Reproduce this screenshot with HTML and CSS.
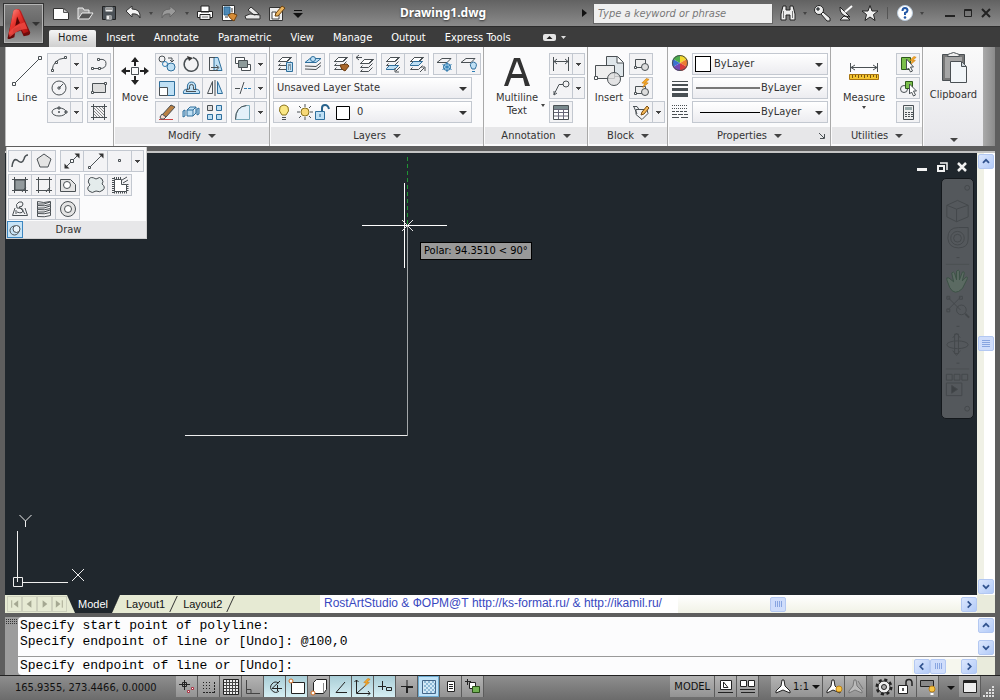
FILE: index.html
```html
<!DOCTYPE html>
<html lang="en">
<head>
<meta charset="utf-8">
<title>Drawing1.dwg</title>
<link rel="stylesheet" href="styles.css">
</head>
<body>
<svg class="defs" aria-hidden="true">
  <defs>
    <symbol id="layers" viewBox="0 0 20 20">
      <path d="M3.500 7.500l4-4h9l-4 4z" fill="#fff"/><path d="M7.500 3.500h9M3.500 7.500l4-4M3.500 7.500h8l4-4M5.500 9.500l-2 2h8l4-4M5.500 13.500l-2 2h8l4-4"/>
    </symbol>
    <symbol id="spark" viewBox="0 0 10 10"><path d="M6 0L1 5l3 .5L2 10l6-5-3-.5L9 1z" fill="#f4a728" stroke="#c97a10" stroke-width=".7"/></symbol>
    <symbol id="up" viewBox="0 0 15 15"><path d="M4 9l3.500-3.500L11 9" fill="none" stroke="#31538f" stroke-width="2"/></symbol>
    <symbol id="down" viewBox="0 0 15 15"><path d="M4 6l3.500 3.500L11 6" fill="none" stroke="#31538f" stroke-width="2"/></symbol>
    <symbol id="left" viewBox="0 0 15 15"><path d="M9 4L5.500 7.500 9 11" fill="none" stroke="#31538f" stroke-width="2"/></symbol>
    <symbol id="right" viewBox="0 0 15 15"><path d="M6 4l3.500 3.500L6 11" fill="none" stroke="#31538f" stroke-width="2"/></symbol>
  </defs>
</svg>

<header class="top">
  <button class="app" aria-label="Application menu">
    <svg viewBox="0 0 32 36">
      <defs>
        <linearGradient id="red" x1="0" y1="0" x2="1" y2="1"><stop offset="0" stop-color="#ff9c94"/><stop offset=".4" stop-color="#e8362f"/><stop offset="1" stop-color="#a80d0d"/></linearGradient>
        <linearGradient id="dark" x1="0" y1="0" x2="0" y2="1"><stop offset="0" stop-color="#c22"/><stop offset="1" stop-color="#5c0606"/></linearGradient>
      </defs>
      <g stroke="none">
        <path d="M4 32L10 4q1-2 4-2 3 0 4 2l10 23q0 2-2 3l-5 1-3-6-6 2-1 5-5 2q-3 0-2-2z" fill="url(#dark)"/>
        <path d="M5 29L10 4q2-3 6-1l10 23-5 2-4-8-7 3-1 6z" fill="url(#red)"/>
        <path d="M14 10l3 7-5 3z" fill="#5a0606"/>
        <path d="M5 27q6-8 17-11l3 7q-9 0-19 9z" fill="#ef4a42" fill-opacity=".8"/>
      </g>
    </svg>
    <i class="tri light"></i>
  </button>
  <div class="top-rows">
    <div class="titlebar">
      <div class="quick">
        <button class="tool" aria-label="New"><svg viewBox="0 0 18 18"><path d="M1.500 4.500h10l5 4v7h-15z" fill="#fff" stroke="#333"/><path d="M11.500 4.500v4h5z" fill="#ccc" stroke="#555"/></svg></button>
        <button class="tool" aria-label="Open"><svg viewBox="0 0 18 18"><path d="M2 15V4h5l1 2h5v3" fill="#999" stroke="#eee"/><path d="M2 15l4-6h11l-4 6z" fill="#555" stroke="#eee"/></svg></button>
        <button class="tool" aria-label="Save"><svg viewBox="0 0 18 18"><path d="M2.500 2.500h13v13h-13z" fill="#4c5258" stroke="#222"/><path d="M5 3h8v5H5zM6 11h6v5H6z" fill="#eee"/><path d="M6 5h6M10 12v3" stroke="#444"/></svg></button>
        <button class="tool" aria-label="Undo"><svg viewBox="0 0 18 18"><path d="M2 7l6-5v3q9 0 8 9-2-5-8-4v3z" fill="#f4f4f4" stroke="#333"/></svg></button><i class="tri tiny"></i>
        <button class="tool" aria-label="Redo"><svg viewBox="0 0 18 18"><path d="M16 7l-6-5v3Q1 5 2 14q2-5 8-4v3z" fill="#999" stroke="#666"/></svg></button><i class="tri tiny"></i>
        <button class="tool" aria-label="Plot"><svg viewBox="0 0 18 18"><path d="M5 2h8v6H5zM1.500 7.500h15v6h-15z" fill="#fff" stroke="#222"/><path d="M4 10.500h10v5H4z" fill="#eee" stroke="#222"/><path d="M6 13h6" stroke="#777"/></svg></button>
        <button class="tool" aria-label="Sheet set"><svg viewBox="0 0 18 18"><path d="M2.500 1.500h12v15h-12z" fill="#fff" stroke="#333"/><path d="M4 3h6v8H4z" fill="#4c8ab9" stroke="#27628c"/><path d="M11 5h2M11 7h2M5 13h3" stroke="#333"/><path d="M8 11l4-2 5 2-3 6q-4-2-6-6z" fill="#d78c35" stroke="#754510"/></svg></button>
        <button class="tool" aria-label="Publish"><svg viewBox="0 0 18 18"><path d="M1 12l5-2 10 1v4H2zM7 3l8 7-5 1-6-5z" fill="#e8e8e8" stroke="#333"/></svg></button>
        <button class="tool" aria-label="Edit sheet"><svg viewBox="0 0 18 18"><path d="M1.500 3.500h13v13h-13z" fill="#eee" stroke="#333"/><path d="M4 8h4v3h3v4H4z" fill="#fff" stroke="#444"/><path d="M7 12l1-3 6-7 3 2-7 8z" fill="#ebb45e" stroke="#68400d"/></svg></button>
        <button class="tool narrow" aria-label="Customize"><svg viewBox="0 0 12 18"><path d="M2 6.500h8" stroke="#111"/><path d="M1 9h10l-5 5z" fill="#111" stroke="none"/></svg></button>
      </div>
      <h1>Drawing1.dwg</h1>
      <div class="info">
        <i class="side"></i>
        <input class="search" type="text" aria-label="Search" placeholder="Type a keyword or phrase">
        <button class="tool" aria-label="Find"><svg viewBox="0 0 18 18"><path d="M4 2h3v4h4V2h3l2 8v6h-5v-5H7v5H2v-6z" fill="#eee" stroke="#222"/><path d="M4.500 7v7M13.500 7v7" stroke="#777"/></svg></button><i class="tri tiny"></i>
        <button class="tool" aria-label="Subscription"><svg viewBox="0 0 18 18"><circle cx="6" cy="6" r="4.500" fill="#eee" stroke="#222"/><circle cx="5" cy="5" r="1.300" fill="#333"/><path d="M8 10l2-2 7 6v3h-3z" fill="#eee" stroke="#222"/></svg></button>
        <button class="tool" aria-label="Communication"><svg viewBox="0 0 18 18"><path d="M3 3q-1 9 10 10zM7 12l-4 4h10l-3-3z" fill="#eee" stroke="#222"/><path d="M8 8l7-6" stroke="#fff" stroke-width="2"/></svg></button>
        <button class="tool" aria-label="Favorites"><svg viewBox="0 0 18 18"><path d="M9 1.500l2 5.500h6l-4.500 3.500 1.500 6-5-3.500-5 3.500 1.500-6L1 7h6z" fill="#eee" stroke="#222"/></svg></button>
        <i class="sep"></i>
        <button class="tool" aria-label="Help"><svg viewBox="0 0 18 18"><circle cx="9" cy="9" r="7.500" fill="#fff" stroke="#bcd"/><path d="M6.500 7q0-3 2.500-3t2.500 2.500Q11.500 8 9 9v2" fill="none" stroke="#2257a5" stroke-width="2"/><circle cx="9" cy="13.500" r="1.300" fill="#2257a5" stroke="none"/></svg></button><i class="tri tiny"></i>
        <div class="win">
          <button aria-label="Minimize"><svg viewBox="0 0 12 12"><path d="M1 9h10" stroke-width="2"/></svg></button>
          <button aria-label="Maximize"><svg viewBox="0 0 12 12"><path d="M2.500 2.500h7v7h-7zM2 3.500h8"/></svg></button>
          <button aria-label="Close"><svg viewBox="0 0 12 12"><path d="M2 2l8 8M10 2l-8 8" stroke-width="2"/></svg></button>
        </div>
      </div>
    </div>
    <nav class="tabs">
      <button class="on">Home</button><button>Insert</button><button>Annotate</button><button>Parametric</button><button>View</button><button>Manage</button><button>Output</button><button>Express Tools</button>
      <button class="min" aria-label="Minimize ribbon"><svg width="26" height="9" viewBox="0 0 26 9"><g stroke="none"><rect width="13" height="7" y="1" rx="2" fill="#e4e4e4"/><path d="M3.500 6h6l-3-3z" fill="#222"/><path d="M18 3h5l-2.500 3z" fill="#ddd"/></g></svg></button>
    </nav>
  </div>
</header>

<section class="ribbon">
  <div class="panel draw">
    <div class="body">
      <button class="big"><svg viewBox="0 0 36 36"><path d="M5 31L31 5"/><path d="M3.500 29.500h3v3h-3zM29.500 3.500h3v3h-3z" fill="#fff"/></svg>Line</button>
      <div class="rows">
        <div class="set"><button aria-label="Polyline arc"><svg viewBox="0 0 20 20"><path d="M3 17Q4 5 16 4"/><path d="M2.500 15.500h2v2h-2zM6.500 7.500h2v2h-2zM15.500 2.500h2v2h-2z" fill="#fff"/></svg></button><button class="arr" aria-label="More arcs"></button></div>
        <div class="set"><button aria-label="Circle"><svg viewBox="0 0 20 20"><circle cx="10" cy="10" r="7"/><path d="M10 10l4-4M9 9h2v2H9z"/></svg></button><button class="arr" aria-label="More circles"></button></div>
        <div class="set"><button aria-label="Ellipse"><svg viewBox="0 0 20 20"><ellipse cx="10" cy="10" rx="7" ry="4"/><path d="M9 10h2M10 9v2"/><path d="M9 5h2v2H9zM16 9h2v2h-2z"/></svg></button><button class="arr" aria-label="More ellipses"></button></div>
      </div>
      <div class="rows">
        <div class="set"><button aria-label="Polyline"><svg viewBox="0 0 20 20"><path d="M2 14.500h9q6 0 6-5t-7-4"/><path d="M2.500 13.500h2v2h-2zM9.500 13.500h2v2h-2zM8.500 4.500h2v2h-2z" fill="#fff"/></svg></button></div>
        <div class="set"><button aria-label="Rectangle"><svg viewBox="0 0 20 20"><path d="M3.500 5.500h13v9h-13z" fill="#ddd"/><path d="M2.500 13.500h2v2h-2zM15.500 4.500h2v2h-2z" fill="#fff"/></svg></button></div>
        <div class="set"><button aria-label="Hatch"><svg viewBox="0 0 20 20"><path d="M2 4.500h16M2 15.500h16M4.500 2v16M15.500 2v16"/><path d="M5 12l3 3M5 9l6 6M5 6l9 9M7 5l8 8M10 5l5 5M13 5l2 2" stroke="#888"/></svg></button></div>
      </div>
    </div>
  </div>

  <div class="panel">
    <div class="body">
      <button class="big"><svg viewBox="0 0 36 36"><path d="M14.500 14.500h7v7h-7z"/><path d="M18 4l4 5h-3v4h-2V9h-3zM18 32l4-5h-3v-4h-2v4h-3zM4 18l5-4v3h4v2H9v3zM32 18l-5-4v3h-4v2h4v3z" fill="#222" stroke="none"/></svg>Move</button>
      <div class="rows">
        <div class="set">
          <button aria-label="Copy"><svg viewBox="0 0 20 20"><circle cx="5" cy="5" r="3"/><path d="M11 4h4v4M13 6l2 2 2-2"/><circle cx="8" cy="10" r="2.500" class="b"/><circle cx="14" cy="13" r="4" class="bf"/></svg></button>
          <button aria-label="Rotate"><svg viewBox="0 0 20 20"><path d="M7 4a7 7 0 1 0 5-.5" stroke-width="1.500"/><path d="M6 2l6 2-4 3z" fill="#333" stroke="none"/></svg></button>
          <button aria-label="Stretch"><svg viewBox="0 0 20 20"><path d="M9 3.500h4l4 13H9z" class="bf"/><path d="M4.500 3v13.500H13M4 3.500h6M6 13.500h7M11 11l3 2.500-3 3"/></svg></button>
        </div>
        <div class="set">
          <button aria-label="Scale"><svg viewBox="0 0 20 20"><path d="M2.500 3.500h15v14h-15z" class="bf"/><path d="M2.500 9.500h8v8h-8z" fill="#fff"/></svg></button>
          <button aria-label="Offset"><svg viewBox="0 0 20 20"><path d="M2.500 15.500q-1-4 4-4.500-1-7 4-7t4 7q5 .5 4 4.500z" class="bf"/><path d="M5 13.500h10M8.500 11V8.500q0-2 2-2t2 2v3h3M5 13q0-2 3.500-2"/></svg></button>
          <button aria-label="Mirror"><svg viewBox="0 0 20 20"><path d="M12.500 3.500l5 12h-5z" class="bf"/><path d="M7.500 3.500l-5 12h5zM10 2v16"/></svg></button>
        </div>
        <div class="set">
          <button aria-label="Erase"><svg viewBox="0 0 20 20"><path d="M2 17.500h14" stroke="#c44"/><path d="M5 13l9-10 4 2-9 10z" fill="#b98043"/><path d="M3 15l2-3 4 3-2 2H4z" fill="#f5d9cc"/></svg></button>
          <button aria-label="Explode"><svg viewBox="0 0 20 20"><path d="M6 8l3-3h6l-3 3v6H6zM6 8h6M12 14l3-3V5M2 9l2-1v6l-2 1zM16 7l2-1v6l-2 1z" class="bf"/></svg></button>
          <button aria-label="Array"><svg viewBox="0 0 20 20"><path d="M2.500 3.500h5v5h-5z" fill="#ddd"/><path d="M11.500 3.500h5v5h-5zM2.500 12.500h5v5h-5zM11.500 12.500h5v5h-5z" class="bf"/></svg></button>
        </div>
      </div>
      <div class="rows second">
        <div class="set"><button aria-label="Draw order"><svg viewBox="0 0 20 20"><path d="M2.500 3.500h9v6h-9zM8.500 10.500h9v6h-9z" fill="#fff"/><path d="M5.500 6.500h9v7h-9z" fill="#8d9a9a"/></svg></button><button class="arr" aria-label="More draw order"></button></div>
        <div class="set"><button aria-label="Trim"><svg viewBox="0 0 20 20"><path d="M2 10.500h5M11 4L7 16"/><path d="M11 10.500h3M15 10.500h3" class="b"/></svg></button><button class="arr" aria-label="More trim"></button></div>
        <div class="set"><button aria-label="Fillet"><svg viewBox="0 0 20 20"><path d="M2.500 17.500q0-13 11-14h3v14z" fill="#e3f1fa" stroke="#7ab"/><path d="M2.500 17.500q0-13 11-14"/></svg></button><button class="arr" aria-label="More fillet"></button></div>
      </div>
    </div>
    <button class="ptitle">Modify<i class="tri"></i></button>
  </div>

  <div class="panel">
    <div class="body">
      <div class="rows">
        <div class="line">
          <div class="set"><button aria-label="Layer properties"><svg viewBox="0 0 20 20"><use href="#layers"/><path d="M11.500 8.500h6v9h-6z" class="bf"/><path d="M13 11h3M13 13h1M15 13h1M13 15h1M15 15h1"/></svg></button></div>
          <div class="set"><button aria-label="Make current"><svg viewBox="0 0 20 20"><path d="M2 8.500l5-4h11l-5 4z" class="bf"/><path d="M2 12l11 .5 5-4M2 15l11 .5 5-4" /><circle cx="10" cy="5" r="2.500" class="bf"/></svg></button></div>
          <div class="set"><button aria-label="Match layer"><svg viewBox="0 0 20 20"><use href="#layers"/><path d="M9 11l7-1 2 2-4 5q-4-1-5-6z" fill="#a8672b" stroke="#6b3c10"/></svg></button><button aria-label="Previous layer"><svg viewBox="0 0 20 20"><use href="#layers" x="2" y="2"/><path d="M1 3.500h6M4 1L1 3.500 4 6"/></svg></button></div>
          <div class="set"><button aria-label="Isolate"><svg viewBox="0 0 20 20"><use href="#layers"/><path d="M3.500 14.500l3-3h9l-4 4h-8z" class="bf"/><path d="M17 13l-4 4M12 14v4h4"/></svg></button><button aria-label="Unisolate"><svg viewBox="0 0 20 20"><use href="#layers"/><path d="M3.500 10.500l3-3h9l-4 4h-8z" class="bf"/><path d="M13 18l4-4M14 13h4v4"/></svg></button></div>
          <div class="set"><button aria-label="Freeze"><svg viewBox="0 0 20 20"><path d="M2 8.500l5-4h9l-4 4z"/><circle cx="12" cy="13" r="3.500" class="bf"/><path d="M12 8v10M7.500 10.500l9 5M7.500 15.500l9-5" class="b"/></svg></button><button aria-label="Layer off"><svg viewBox="0 0 20 20"><path d="M2 8.500l5-4h9l-4 4z"/><path d="M13 15q-4-6 1.500-7 5 1 1.500 7z" class="bf"/><path d="M13 17.500h3" class="b"/></svg></button></div>
        </div>
        <label class="combo"><select aria-label="Layer state"><option>Unsaved Layer State</option></select></label>
        <label class="combo">
          <svg class="wide" viewBox="0 0 80 20"><path d="M8 13q-4-4-2-8 4-4 8 0 2 4-2 8z" fill="#fae784" stroke="#8a7420"/><path d="M8 15.500h4M8 17.500h4"/><circle cx="31" cy="10" r="4" fill="#f7d978" stroke="#8a7420"/><path d="M31 2v3M31 15v3M23 10h3M36 10h3M25 4l2 2M37 4l-2 2M25 16l2-2M37 16l-2-2"/><path d="M41.500 9.500h9v8h-9z" class="bf"/><path d="M48 9V6q0-3 3-3t4 4" fill="none" stroke="#27628c" stroke-width="2"/><path d="M46 12v3" stroke="#27628c"/><path d="M62.500 4.500h13v13h-13z" fill="#fff" stroke="#000"/></svg>
          <select aria-label="Layer"><option>0</option></select></label>
      </div>
    </div>
    <button class="ptitle">Layers<i class="tri"></i></button>
  </div>

  <div class="panel">
    <div class="body">
      <button class="big text"><svg viewBox="0 0 36 36"><path d="M5 33L15 5h6l10 28h-5l-2-8H12l-3 8zM13 21h10L18 8z" fill="#333" stroke="none" fill-rule="evenodd"/></svg>Multiline<br>Text<i class="tri tiny"></i></button>
      <div class="rows">
        <div class="set"><button aria-label="Linear"><svg viewBox="0 0 20 20"><path d="M2.500 3v14M17.500 3v14M3 7.500h14M6 5L3 7.500 6 10M14 5l3 2.500-3 2.500"/></svg></button><button class="arr" aria-label="More dimensions"></button></div>
        <div class="set"><button aria-label="Leader"><svg viewBox="0 0 20 20"><circle cx="15" cy="6" r="3"/><path d="M12 6.500H8l-5 10M3 13v4l3-2"/></svg></button><button class="arr" aria-label="More leaders"></button></div>
        <div class="set"><button aria-label="Table"><svg viewBox="0 0 20 20"><path d="M2.500 3.500h15v14h-15z" fill="#fff"/><path d="M3 4h14v3H3z" fill="#79898d" stroke="none"/><path d="M3 7.500h14M3 10.500h14M3 14h14M7.500 7v10M12.500 7v10" stroke="#667"/></svg></button></div>
      </div>
    </div>
    <button class="ptitle">Annotation<i class="tri"></i></button>
  </div>

  <div class="panel">
    <div class="body">
      <button class="big"><svg viewBox="0 0 36 36"><path d="M15.500 3.500h11l6 6v14h-17z" fill="#dfe6ea"/><path d="M26 4v6h6" fill="#fff"/><path d="M4.500 12.500h19v13h-19z" fill="#eee"/><path d="M3.500 23.500h3v3h-3z" fill="#fff"/><circle cx="23" cy="26" r="6.500" fill="#ddd" fill-opacity=".8"/></svg>Insert</button>
      <div class="rows">
        <div class="set"><button aria-label="Create block"><svg viewBox="0 0 20 20"><path d="M4.500 5.500h10v8h-10z" fill="#eee"/><path d="M3.500 12.500h2v2h-2z" fill="#fff"/><circle cx="14" cy="13" r="3.500" fill="#ddd"/></svg></button></div>
        <div class="set"><button aria-label="Edit block"><svg viewBox="0 0 20 20"><path d="M4.500 8.500h10v7h-10z" fill="#eee"/><path d="M3.500 14.500h2v2h-2z" fill="#fff"/><circle cx="14" cy="14" r="3.500" fill="#ddd"/><use href="#spark" x="10" y="0" width="9" height="10"/></svg></button></div>
        <div class="set"><button aria-label="Edit attributes"><svg viewBox="0 0 20 20"><path d="M2 4.500h4l2 3M5 7.500h11l1 4-6 6-6-5zM3 5l3 7"/><path d="M10 13l1-3 5-6 2 2-5 6z" fill="#f5b856" stroke="#7b4d11"/></svg></button><button class="arr" aria-label="More attributes"></button></div>
      </div>
    </div>
    <button class="ptitle">Block<i class="tri"></i></button>
  </div>

  <div class="panel">
    <div class="body props">
      <div class="rows">
        <div class="line"><svg class="pic" viewBox="0 0 18 20"><g stroke="none"><path d="M9 10V2a8 8 0 0 1 7 4z" fill="#f4d92d"/><path d="M9 10l7-4a8 8 0 0 1 0 8z" fill="#ed7d31"/><path d="M9 10l7 4a8 8 0 0 1-7 4z" fill="#d93a3a"/><path d="M9 10v8a8 8 0 0 1-7-4z" fill="#7548b4"/><path d="M9 10l-7 4a8 8 0 0 1 0-8z" fill="#3b72d0"/><path d="M9 10L2 6a8 8 0 0 1 7-4z" fill="#4cae4c"/></g><circle cx="9" cy="10" r="7.500"/></svg>
          <label class="combo"><i class="swatch"></i><select aria-label="Color"><option>ByLayer</option></select></label></div>
        <div class="line"><svg class="pic" viewBox="0 0 18 20"><path d="M1 4.500h16" stroke-width="1"/><path d="M1 8h16" stroke-width="2"/><path d="M1 12.500h16" stroke-width="3"/><path d="M1 18h16" stroke-width="4"/></svg>
          <label class="combo"><i class="rule grey"></i><select class="end" aria-label="Lineweight"><option>ByLayer</option></select></label></div>
        <div class="line"><svg class="pic" viewBox="0 0 18 20"><path d="M1 4.500h16M1 7.500h16" stroke-dasharray="1 1"/><path d="M1 10.500h16" stroke-dasharray="3 1"/><path d="M1 13.500h16" stroke-dasharray="5 1"/><path d="M1 16.500h16" stroke-dasharray="7 2"/></svg>
          <label class="combo"><i class="rule"></i><select class="end" aria-label="Linetype"><option>ByLayer</option></select></label></div>
      </div>
    </div>
    <button class="ptitle">Properties<i class="tri"></i><svg class="launch" viewBox="0 0 8 8"><path d="M1 1l5 5M6.500 2v4.500H2"/></svg></button>
  </div>

  <div class="panel">
    <div class="body">
      <button class="big text"><svg viewBox="0 0 36 36"><path d="M4.500 10v9M31.500 10v9M5 14.500h26M9 12l-4 2.500L9 17M27 12l4 2.500-4 2.500"/><path d="M3.500 21.500h29v5h-29z" fill="#f5c531" stroke="#a87510"/><path d="M6.500 22v3M9.500 22v2M12.500 22v3M15.500 22v2M18.500 22v3M21.500 22v2M24.500 22v3M27.500 22v2M30.500 22v3" stroke="#7a5610"/></svg>Measure<i class="tri tiny under"></i></button>
      <div class="rows">
        <div class="set"><button aria-label="Quick select"><svg viewBox="0 0 20 20"><path d="M3.500 3.500h9v12h-9z" fill="#7cc04b" stroke="#2c5a1a"/><use href="#spark" x="11" y="2" width="8" height="9"/><path d="M8.500 5v11l2-2 2 4 2-1-2-4h3z" fill="#fff"/></svg></button></div>
        <div class="set"><button aria-label="Select similar"><svg viewBox="0 0 20 20"><circle cx="6" cy="11" r="3.500"/><path d="M7.500 3.500h7v7h-7z" fill="#7cc04b" stroke="#2c5a1a"/><path d="M11.500 6v10l2-2 2 4 2-1-2-4h3z" fill="#fff"/></svg></button></div>
        <div class="set"><button aria-label="Calculator"><svg viewBox="0 0 20 20"><path d="M5.500 3.500h10v14h-10z" fill="#eee"/><path d="M7 5h7v3H7z" fill="#9aa" stroke="none"/><path d="M7 10.500h8M7 12.500h8M7 14.500h8" stroke-dasharray="2 1"/></svg></button></div>
      </div>
    </div>
    <button class="ptitle">Utilities<i class="tri"></i></button>
  </div>

  <button class="clip"><svg viewBox="0 0 36 36"><path d="M6.500 4.500h22v26h-22z" fill="#777"/><path d="M9 7h17v21H9z" fill="#a5a5a5" stroke="none"/><path d="M11.500 6.500q0-3 3-3 3-2 6 0 3 0 3 3z" fill="#eee"/><path d="M14.500 11.500h11l5 5v16h-16z" fill="#f2f6f9"/><path d="M25.500 12v4.500H30" fill="#cfd8de"/></svg>Clipboard<i class="tri"></i></button>
  <div class="fill"></div>
</section>

<main class="work">
  <aside class="flyout">
    <div class="frow">
      <div class="set"><button aria-label="Spline"><svg viewBox="0 0 20 20"><path d="M2 16q1-9 5-7 5 5 7-1 1-4 4-4" stroke-width="1.500"/></svg></button><button aria-label="Polygon"><svg viewBox="0 0 20 20"><path d="M10 3l7 5-3 8H6L3 8z" fill="#e4e4e4"/></svg></button></div>
      <div class="set"><button aria-label="Construction line"><svg viewBox="0 0 20 20"><path d="M3 17L17 3"/><path d="M17.500 2.500v5l-5-5zM2.500 17.500v-5l5 5z" fill="#333" stroke="none"/><path d="M8.500 8.500h3v3h-3z" fill="#fff"/></svg></button><button aria-label="Ray"><svg viewBox="0 0 20 20"><path d="M3 17L17 3"/><path d="M17.500 2.500v5l-5-5z" fill="#333" stroke="none"/><path d="M2.500 15.500h2v2h-2z" fill="#fff"/></svg></button><button aria-label="Point"><svg viewBox="0 0 20 20"><path d="M8.500 8.500h2v2h-2z"/></svg></button><button class="arr" aria-label="More points"></button></div>
    </div>
    <div class="frow">
      <div class="set"><button aria-label="Gradient"><svg viewBox="0 0 20 20"><path d="M5 5h10v10H5z" fill="#92999c"/><path d="M2 4.500h16M2 15.500h16M4.500 2v16M15.500 2v16M12 17l4-5"/></svg></button><button aria-label="Boundary"><svg viewBox="0 0 20 20"><path d="M2 4.500h16M2 15.500h16M4.500 2v16M15.500 2v16M12 17l4-5"/></svg></button><button aria-label="Region"><svg viewBox="0 0 20 20"><path d="M2.500 4.500h10l5 5v7h-15z" fill="#e4e4e4"/><circle cx="9" cy="10" r="3.500" fill="#fff"/></svg></button></div>
      <div class="set"><button aria-label="Revision cloud"><svg viewBox="0 0 20 20"><path d="M10 4q4-3 6 0t0 5q4 3 1 6t-7 1q-4 3-7 0t1-6q-3-3-1-6t7 0z" fill="#e4ecec"/></svg></button><button aria-label="Wipeout"><svg viewBox="0 0 20 20"><path d="M4.500 4.500h7v5h5v7h-12z" fill="#fff"/><path d="M12 5l5-3M13 8l5-3"/><path d="M3 3v15M4 3h8M4 17.500h14M17.500 9v8" stroke-dasharray="1 1" stroke-width="2"/></svg></button></div>
    </div>
    <div class="frow">
      <div class="set"><button aria-label="3D polyline"><svg viewBox="0 0 20 20"><path d="M5 9L2.500 16.500h15L15 9M7 13q5 2 6-1t-6-3q-2-4 2-6 4-1 4 2t-4 3q3 2 6 7M6 15v-4"/></svg></button><button aria-label="Helix"><svg viewBox="0 0 20 20"><path d="M3.500 2.500q6 2 13 0v3q-6 2-13 1zM16.500 5.500v4q-6 2-13 1v-4M16.500 9.500v4q-6 2-13 1v-4M16.500 13.500v3q-6 2-13 1v-3M4 5q6 1 12-2M4 9q6 1 12-2M4 13q6 1 12-2"/></svg></button><button aria-label="Donut"><svg viewBox="0 0 20 20"><circle cx="10" cy="10" r="7.500" fill="#e4e4e4"/><circle cx="10" cy="10" r="3.500" fill="#fff"/></svg></button></div>
    </div>
    <div class="ffoot"><button class="pin" aria-label="Pin panel"><svg viewBox="0 0 14 16"><circle cx="6.500" cy="8.500" r="4.500"/><circle cx="8.500" cy="7" r="3.500" fill="#eaf5fc"/></svg></button><span>Draw</span></div>
  </aside>

  <div class="canvas">
    <svg class="drawing" role="img" aria-label="Polyline in progress">
      <path d="M402.500 4v68" stroke="#1f9433" stroke-dasharray="4 3"/>
      <path d="M180 282.500h222.500" stroke="#eee"/><path d="M402.500 73v210" stroke="#a3a7a9"/>
      <path d="M357 72.500h85M399.500 30v85" stroke="#fff"/>
      <path d="M397 67l11 11M408 67l-11 11" stroke="#e8e8e8"/>
    </svg>
    <div class="polar">Polar: 94.3510 &lt; 90°</div>
    <svg class="ucs" viewBox="0 0 80 80"><path d="M8.500 71V20M13 71.500h46M4.500 66.500h9v9h-9z"/><path d="M10.500 4l6 6 6-6M16.500 10v6M63 58l12 12M75 58L63 70"/></svg>
    <div class="docwin">
      <button aria-label="Minimize drawing"><svg viewBox="0 0 12 12"><path d="M1 8.500h10" stroke-width="3"/></svg></button>
      <button aria-label="Restore drawing"><svg viewBox="0 0 12 12"><path d="M2 5h6v5H2z" stroke-width="2"/><path d="M4 2h7v7" stroke-width="1.500"/></svg></button>
      <button aria-label="Close drawing"><svg viewBox="0 0 12 12"><path d="M2 2l8 8M10 2l-8 8" stroke-width="2.500"/></svg></button>
    </div>
    <div class="navbar">
      <svg viewBox="0 0 32 240">
        <circle cx="26" cy="6" r="2.500"/><path d="M5 24l11-5 11 5v12l-12 5-10-5zM5 24l10 4 12-4M15 28v13"/>
        <path d="M6 58q0-11 11-11h10v12q0 9-10 9T6 58z"/><circle cx="16" cy="58" r="7"/><circle cx="16" cy="58" r="4"/><path d="M15 78h3"/><path d="M4 85h24" stroke="#4b4f53"/>
        <path d="M5 101q-1-3 2-2l5 4-2-9q2-2 3 0l2 7V92q2-2 3 0v9l3-8q2-1 2 1l-2 8 4-4q2 0 1 2l-5 10q-8 8-13-1z" stroke="#3c5245" fill="#5b6a62"/>
        <path d="M6 119l13 13M19 119L6 132M5 118h3v3H5zM18 118h3v3h-3zM5 131h3v3H5z"/><circle cx="20" cy="132" r="5"/><path d="M24 136l4 4" stroke-width="2"/><path d="M15 149h3"/>
        <path d="M13 157h4v20h-4zM11 161l4-5 4 5M11 174l4 5 4-5"/><ellipse cx="16" cy="168" rx="11" ry="4"/><path d="M15 187h3"/><path d="M4 193h24" stroke="#4b4f53"/>
        <path d="M4.500 198.500h6v6h-6zM12.500 198.500h6v6h-6zM20.500 198.500h6v6h-6zM4.500 207.500h16v13h-16z"/><path d="M10 210l6 4-6 4z" fill="#3e4245"/><circle cx="26" cy="234" r="2.500"/>
      </svg>
    </div>
  </div>
  <div class="vscroll">
    <button class="sb" aria-label="Scroll up"><svg><use href="#up"/></svg></button>
    <i class="thumb h"></i>
    <button class="sb" aria-label="Scroll down"><svg><use href="#down"/></svg></button>
  </div>
</main>

<div class="layouts">
  <div class="steps">
    <button aria-label="First"><svg viewBox="0 0 14 14"><path d="M4 3v8"/><path d="M11 3v8L6 7z" class="f"/></svg></button><button aria-label="Previous"><svg viewBox="0 0 14 14"><path d="M9 3v8L4 7z" class="f"/></svg></button><button aria-label="Next"><svg viewBox="0 0 14 14"><path d="M5 3v8l5-4z" class="f"/></svg></button><button aria-label="Last"><svg viewBox="0 0 14 14"><path d="M10 3v8"/><path d="M3 3v8l5-4z" class="f"/></svg></button>
  </div>
  <div class="sheets"><button class="on">Model</button><button>Layout1</button><button>Layout2</button></div>
  <p class="credit">RostArtStudio &amp; ФОРМ@Т <a href="http://ks-format.ru/">http://ks-format.ru/</a> &amp; <a href="http://ikamil.ru/">http://ikamil.ru/</a></p>
  <div class="hscroll"><i class="thumb"></i><button class="sb" aria-label="Scroll right"><svg><use href="#right"/></svg></button></div>
  <i class="corner"></i>
</div>

<section class="command">
  <div class="grip"></div>
  <div class="console">
    <div class="history">
      <div class="log">Specify start point of polyline:<br>Specify endpoint of line or [Undo]: @100,0</div>
      <div class="cscroll"><button class="sb" aria-label="History up"><svg><use href="#up"/></svg></button><button class="sb" aria-label="History down"><svg><use href="#down"/></svg></button></div>
    </div>
    <div class="prompt">
      <label for="cmd">Specify endpoint of line or [Undo]:</label><input id="cmd" type="text">
      <div class="pscroll"><button class="sb" aria-label="Left"><svg><use href="#left"/></svg></button><i class="thumb"></i><span></span><button class="sb" aria-label="Right"><svg><use href="#right"/></svg></button></div>
      <i class="corner"></i>
    </div>
  </div>
</section>

<footer class="status">
  <output class="coords">165.9355, 273.4466, 0.0000</output>
  <div class="modes">
    <button aria-label="Infer"><svg viewBox="0 0 20 20"><path d="M2 7.500h11M7.500 3v10M5.500 5.500h4v4h-4z"/><path d="M10.500 13.500h2v2h-2zM14.500 10.500h2v2h-2z" stroke="#a34" fill="#fff"/></svg></button>
    <button aria-label="Snap"><svg viewBox="0 0 20 20"><path d="M4 5.500h8M4 8.500h8M4 11.500h8" stroke-dasharray="1 2"/><path d="M4 15.500h11M15.500 5v11" stroke-dasharray="2 1"/></svg></button>
    <button aria-label="Grid"><svg viewBox="0 0 20 20"><path d="M2.500 2.500h15v15h-15z" fill="#eee"/><path d="M5.500 3v14M8.500 3v14M11.500 3v14M14.500 3v14M3 5.500h14M3 8.500h14M3 11.500h14M3 14.500h14" stroke="#444"/></svg></button>
    <button aria-label="Ortho"><svg viewBox="0 0 20 20"><path d="M3.500 3v13.500H17M3 12.500h5v4" stroke="#444"/></svg></button>
    <button class="on" aria-label="Polar"><svg viewBox="0 0 20 20"><path d="M15 4l-8 7.500h10M13.500 6a5 5 0 1 0 .5 8M12.500 8v6"/></svg></button>
    <button class="on" aria-label="Object snap"><svg viewBox="0 0 20 20"><path d="M4.500 5.500h13v11h-13z" fill="#fff"/><circle cx="4" cy="4" r="2" stroke="#d26a1e" fill="#fff"/></svg></button>
    <button aria-label="3D object snap"><svg viewBox="0 0 20 20"><path d="M4.500 5.500l3-3h10v10l-3 4h-10z" fill="#fff"/><path d="M14.500 6v10" stroke="#888"/><circle cx="4" cy="16" r="2" stroke="#d26a1e" fill="#fff"/></svg></button>
    <button class="on" aria-label="Tracking"><svg viewBox="0 0 20 20"><path d="M14 5L5 15.500h11"/></svg></button>
    <button class="on" aria-label="Dynamic UCS"><svg viewBox="0 0 20 20"><path d="M3.500 3v13.500H17M4 16l9-8M15 14l2 2.500-2 2M1.500 5l2-2 2 2"/><use href="#spark" x="10" y="1" width="8" height="9"/></svg></button>
    <button class="on" aria-label="Dynamic input"><svg viewBox="0 0 20 20"><path d="M3 9.500h8M7.500 4v9M11.500 10.500h5v3h-5z"/></svg></button>
    <button aria-label="Lineweight"><svg viewBox="0 0 20 20"><path d="M10 3v7M4 9.500h6"/><path d="M10 10h6M10 9v7" stroke-width="2"/></svg></button>
    <button class="on strong" aria-label="Transparency"><svg viewBox="0 0 20 20"><path d="M3.500 3.500h13v13h-13z" fill="#d3e9f6" stroke="#468"/><path d="M5 5h10M5 9h10M5 13h10M7 7h9M7 11h9M7 15h9" stroke="#8db9d6" stroke-width="2" stroke-dasharray="2 2"/></svg></button>
    <button aria-label="Quick properties"><svg viewBox="0 0 20 20"><path d="M6.500 4.500h7v10h-7z" fill="#fff"/><path d="M8 7.500h4M8 9.500h4M8 11.500h4"/></svg></button>
    <button aria-label="Selection cycling"><svg viewBox="0 0 20 20"><path d="M2 4.500h6M4.500 2v6"/><path d="M6.500 5.500h6v6h-6z" fill="#fff"/><path d="M9.500 9.500h7v6h-7z" fill="#72b254" stroke="#284f17"/></svg></button>
  </div>
  <div class="modes">
    <button class="model">MODEL</button>
    <button aria-label="Quick view layouts"><svg viewBox="0 0 20 20"><path d="M4.500 3.500h11v9h-11z" fill="#fff"/><path d="M7.500 5v5.500H12zM2 15.500h15"/></svg></button>
    <button aria-label="Quick view drawings"><svg viewBox="0 0 20 20"><path d="M2.500 3.500h6v6h-6zM10.500 3.500h6v6h-6z" fill="#fff"/><path d="M2 12.500h15M3 15.500h14"/></svg></button>
  </div>
  <div class="modes scale">
    <button class="model"><svg viewBox="0 0 20 20"><path d="M9 3h2l1 6 5 5v2l-7-3-7 3v-2l5-5z" fill="#fff"/></svg>1:1<i class="tri dark"></i></button>
    <button aria-label="Annotation visibility"><svg viewBox="0 0 20 20"><path d="M8 3h2l1 6 5 5v2l-7-3-6 3v-2l4-5z" fill="#fff"/><circle cx="15" cy="12" r="3" fill="#f6c443" stroke="#b98018"/></svg></button>
    <button aria-label="Annotation auto scale"><svg viewBox="0 0 20 20"><path d="M8 3h2l1 6 5 5v2l-7-3-6 3v-2l4-5zM12 4l5 8" fill="#bbb" stroke="#777"/></svg></button>
  </div>
  <div class="modes tray">
    <button aria-label="Workspace"><svg viewBox="0 0 20 20"><circle cx="10" cy="10" r="7" stroke-width="3" stroke-dasharray="3 2.500"/><circle cx="10" cy="10" r="6" fill="#eee"/><circle cx="10" cy="10" r="2.500" fill="#aaa"/></svg></button>
    <button aria-label="Lock"><svg viewBox="0 0 20 20"><path d="M2.500 8.500h9v8h-9z" fill="#fff"/><path d="M10 8V5q0-2.500 3-2.500T16 6v3M7 11v3" stroke-width="1.500"/></svg></button>
    <button aria-label="Hardware"><svg viewBox="0 0 20 20"><path d="M2.500 3.500h13v6h-13z" fill="#888"/><circle cx="14" cy="12" r="3" fill="#f6c443" stroke="#b98018"/><path d="M12.500 17h3" stroke="#fff" stroke-width="2"/></svg></button>
    <i class="tri dark lone"></i>
    <button aria-label="Clean screen"><svg viewBox="0 0 20 20"><path d="M3.500 3.500h13v12h-13z" fill="#eee"/><path d="M3.500 5h13" stroke-width="2"/></svg></button>
  </div>
  <svg class="resize" viewBox="0 0 12 12"><path d="M9 2h2M6 5h2M9 5h2M3 8h2M6 8h2M9 8h2M0 11h2M3 11h2M6 11h2M9 11h2" stroke="#ddd" stroke-width="2"/></svg>
</footer>
</body>
</html>
```

FILE: styles.css
```css
* { box-sizing: border-box; }
body {
  margin: 0;
  min-height: 100vh;
  display: flex;
  flex-direction: column;
  background: #5e5e5e;
  color: #333;
  font: 11px/14px "DejaVu Sans Condensed", "Noto Sans", sans-serif;
}
button, input, select { font: inherit; color: inherit; margin: 0; }
button { padding: 0; border: 0; background: none; }
svg { display: block; fill: none; stroke: #4a5054; }
.defs { position: absolute; width: 0; height: 0; }
.b { stroke: #2f7fb5; }
.bf { stroke: #2f6f9c; fill: #bfe0f5; }

.tri { display: inline-block; border: 4px solid transparent; border-top-color: #444; border-bottom: 0; }
.tri.tiny { border-width: 2px; border-top-width: 3px; border-bottom: 0; }
.tri.light { border-top-color: #333; }
.tri.dark { border-top-color: #111; }

/* Title bar and ribbon tabs */
.top { display: flex; background: #3c3c3c linear-gradient(#626262, #8b8b8b) no-repeat top / 100% 26px; }
.app {
  display: flex;
  align-items: center;
  width: 41px;
  height: 41px;
  margin: 3px 0 0 3px;
  border: 1px solid #333;
  background: linear-gradient(#7c7c7c, #686868 50%, #9a9a9a);
  box-shadow: inset 0 0 0 1px #b5b5b5;
}
.app svg { flex: none; width: 30px; height: 36px; }
.app .tri { margin-left: -2px; }
.top-rows { flex: 1; min-width: 0; }
.titlebar { display: flex; align-items: center; height: 27px; border-bottom: 1px solid #2c2c2c; }
.quick, .info { display: flex; align-items: center; }
.quick { padding-left: 8px; gap: 6px; }
.tool { width: 18px; height: 18px; }
.tool.narrow { width: 12px; }
.quick .tri { margin: 0 1px; }
h1 { flex: 1; margin: 0; text-align: center; color: #fff; font: bold 12px/20px "Noto Sans", sans-serif; text-shadow: 0 1px 2px #333; }
.info { gap: 6px; padding-right: 8px; }
.side { border: 4px solid transparent; border-left: 5px solid #111; border-right: 0; }
.search { width: 180px; height: 21px; padding: 0 4px; border: 1px solid #666; background: #f0f0f0; font-style: italic; }
.search::placeholder { color: #777; opacity: 1; }
.sep { width: 1px; height: 12px; background: #555; margin: 0 2px; }
.win { display: flex; gap: 6px; margin-left: 14px; }
.win button { width: 12px; }
.win svg { stroke: #222; }
.tabs { display: flex; align-items: flex-end; height: 20px; padding-left: 5px; gap: 1px; }
.tabs button { height: 17px; padding: 0 9px 2px; color: #fff; }
.tabs .on { color: #222; background: linear-gradient(#f5f5f5, #cfcfcf); border-radius: 2px 2px 0 0; }
.tabs .min { padding-left: 22px; }

/* Ribbon */
.ribbon { display: flex; margin: 0 5px; padding-left: 1px; height: 99px; background: #fbfbfc; border-left: 1px solid #bbb; }
.panel { display: flex; flex-direction: column; margin-right: 1px; border-right: 1px solid #a9a9a9; }
.body { display: flex; gap: 2px; padding: 6px 2px 4px; }
.draw .rows + .rows { margin-left: 2px; }
.rows { display: flex; flex-direction: column; gap: 2px; }
.rows.second { margin-left: 2px; }
.line { display: flex; gap: 4px; }
.set { display: flex; align-self: flex-start; border: 1px solid #c3c8d0; background: #f3f3f5; }
.set button { width: 24px; height: 20px; border-left: 1px solid #c3c8d0; }
.set button:first-child { width: 22px; border-left: 0; }
.set svg { width: 20px; height: 20px; margin: auto; }
.set .arr { width: 12px; background: linear-gradient(#444, #444) no-repeat center 9px / 5px 1px, linear-gradient(#444, #444) no-repeat center 10px / 3px 1px, linear-gradient(#444, #444) no-repeat center 11px / 1px 1px; }
.big { display: flex; flex-direction: column; align-items: center; width: 36px; line-height: 13px; position: relative; }
.big svg { width: 36px; height: 36px; margin-bottom: 2px; }
.big.text { width: 60px; }
.big .tri { position: absolute; right: 2px; top: 51px; }
.big .tri.under { right: 28px; top: 53px; }
.ptitle { display: flex; align-items: center; justify-content: center; gap: 7px; height: 17px; padding: 0; background: #e7e7e9; position: relative; }
.launch { position: absolute; right: 4px; width: 8px; height: 8px; }
.combo { display: flex; align-items: center; height: 22px; border: 1px solid #c3c8d0; background: linear-gradient(#fff, #ececf0); position: relative; padding-right: 16px; margin-right: 9px; }
.combo::after { content: ""; position: absolute; right: 4px; top: 9px; border: 4px solid transparent; border-top-color: #333; border-bottom: 0; }
.combo select { appearance: none; flex: 1; min-width: 0; padding: 0 3px; border: 0; background: none; }
.combo .wide { width: 80px; height: 20px; }
.props .line { gap: 3px; }
.props .combo { width: 136px; margin: 0; padding-right: 14px; }
.props .combo select { padding: 0 1px; }
.props .combo .end { flex: none; margin-right: 10px; }
.pic { width: 18px; height: 20px; }
.swatch { width: 16px; height: 16px; margin: 0 2px; border: 1px solid #000; background: #fff; }
.rule { flex: 1; height: 1px; margin-left: 7px; background: #000; }
.rule.grey { height: 2px; margin-left: 3px; background: #777; }
.clip { display: flex; flex-direction: column; align-items: center; width: 59px; padding: 3px 0 4px; background: linear-gradient(#fafafa, #e6e6ea); }
.clip svg { width: 36px; height: 36px; margin-bottom: 2px; }
.clip .tri { margin-top: auto; }
.fill { flex: 1; background: linear-gradient(90deg, #aaa, #8a8a8a); }

/* Drawing area */
.work { flex: 1; display: flex; position: relative; margin: 5px 5px 0; border-top: 2px solid #c4c4c4; }
.canvas { flex: 1; position: relative; background: #20272d; overflow: hidden; }
.drawing { position: absolute; width: 100%; height: 100%; }
.polar { position: absolute; left: 415px; top: 89px; padding: 1px 3px; border: 1px solid #000; background: #999; color: #000; }
.ucs { position: absolute; left: 4px; bottom: 4px; width: 80px; height: 80px; stroke: #eee; }
.docwin { position: absolute; top: 8px; right: 9px; display: flex; gap: 8px; }
.docwin button { width: 12px; }
.docwin svg { stroke: #f2f2f2; }
.navbar { position: absolute; top: 25px; right: 3px; width: 33px; padding: 3px 0; border: 1px solid #14181c; border-radius: 5px; background: #54585c; }
.navbar svg { stroke: #44484b; }
.flyout { position: absolute; z-index: 1; left: 1px; top: -6px; padding: 3px 0 0; background: #fbfbfc; border: 1px solid #d0d0d0; border-top: 0; width: 141px; }
.frow { display: flex; gap: 4px; padding: 0 1px; margin-bottom: 2px; }
.ffoot { display: flex; align-items: center; height: 17px; margin-top: -1px; background: #e7e7e9; }
.ffoot span { flex: 1; padding-right: 32px; text-align: center; }
.pin { width: 16px; height: 17px; border: 1px solid #3c86c0; background: #c7e4f7; }

/* Scroll bars */
.vscroll { width: 18px; padding: 1px; display: flex; flex-direction: column; align-items: center; justify-content: space-between; background: linear-gradient(90deg, #f0f1e6 40%, #fff 40%); }
.sb, .thumb { flex: none; width: 16px; height: 15px; border: 1px solid #b3c8f2; border-radius: 2px; background: linear-gradient(135deg, #dce7fd, #b3cbf8); }
.sb svg { width: 14px; height: 13px; }
.thumb { background: repeating-linear-gradient(90deg, transparent 0 1px, #88a5e0 1px 2px) no-repeat center / 8px 6px, #cfddfb; }
.thumb.h { background: repeating-linear-gradient(transparent 0 1px, #88a5e0 1px 2px) no-repeat center / 8px 8px, #cfddfb; margin-bottom: 62px; }
.corner { flex: none; width: 18px; align-self: stretch; background: #e9ebdc; }

/* Layout tabs */
.layouts { display: flex; align-items: stretch; height: 18px; margin: 0 5px; background: #e6ead3; color: #111; }
.steps { display: flex; padding: 1px 0 1px 2px; }
.steps button { width: 15px; border: 1px solid #cdd0bd; }
.steps svg { width: 13px; height: 14px; stroke: #a5a892; }
.steps .f { fill: #a5a892; stroke: none; }
.sheets { display: flex; flex: 0 0 253px; font-family: "Liberation Sans", sans-serif; }
.sheets button { position: relative; padding: 0 12px 0 6px; }
.sheets button::after { content: ""; position: absolute; right: 3px; top: 1px; bottom: 1px; border-right: 1px solid #333; transform: skewX(-25deg); }
.sheets .on { color: #fff; padding: 0 12px 0 11px; background: #20272d; clip-path: polygon(0 0, 100% 0, calc(100% - 8px) 100%, 8px 100%); }
.credit { flex: none; margin: 0; padding: 0 16px 0 4px; background: #fff; color: #3848c0; font: 12px/17px "Liberation Sans", sans-serif; }
.credit a { color: inherit; text-decoration: none; }
.hscroll { flex: 1; display: flex; align-items: center; justify-content: space-between; padding-left: 92px; background: linear-gradient(#fff, #f1f2e6); }

/* Command window */
.command { display: flex; margin: 4px 5px 0; background: #9c9c9c; }
.grip { width: 13px; }
.grip::before { content: ""; display: block; height: 6px; margin: 2px 1px 0 0; background: conic-gradient(#333 25%, transparent 0) 0 0 / 2px 2px; }
.console { flex: 1; min-width: 0; background: #fcfcfd; border-radius: 4px 0 0 4px; color: #000; font: 13px/16px "Liberation Mono", monospace; }
.history { display: flex; justify-content: space-between; height: 40px; border-bottom: 1px solid #999; padding-left: 2px; }
.log { padding-top: 1px; }
.cscroll { width: 17px; padding: 1px 0; display: flex; flex-direction: column; justify-content: space-between; }
.prompt { display: flex; align-items: center; height: 18px; padding-left: 2px; }
.prompt input { flex: 1; min-width: 0; height: 16px; border: 0; background: none; outline: 0; padding: 0 4px; }
.pscroll { display: flex; align-items: center; width: 65px; padding-left: 2px; background: #f6f7ee; }
.pscroll span { flex: 1; }

/* Status bar */
.status { display: flex; align-items: stretch; height: 25px; padding: 0 5px 3px 4px; border-top: 1px solid #222; background: linear-gradient(#8e8e8e, #6b6b6b); color: #111; }
.coords { width: 172px; padding: 5px 0 0 11px; }
.modes { display: flex; }
.modes button { display: flex; align-items: center; justify-content: center; width: 22px; border-right: 1px solid #5c5c5c; background: linear-gradient(#b4b4b4, #939393); }
.modes svg { width: 20px; height: 20px; stroke: #222; }
.modes .on { background: linear-gradient(#a9cdd6, #d5eef3); }
.modes .strong { background: #bfe2f7; box-shadow: inset 0 0 0 1px #6ca9cf; }
.modes + .modes { margin-left: auto; }
.modes .model { width: auto; padding: 0 4px; }
.modes + .scale { margin-left: 12px; }
.modes.scale .model { padding: 0 2px; }
.scale .tri { margin-left: 3px; }
.modes + .tray { margin-left: 6px; }
.tray .lone { margin: 10px 4px 0 8px; }
.resize { width: 12px; height: 12px; align-self: flex-end; margin-left: 2px; }
```
